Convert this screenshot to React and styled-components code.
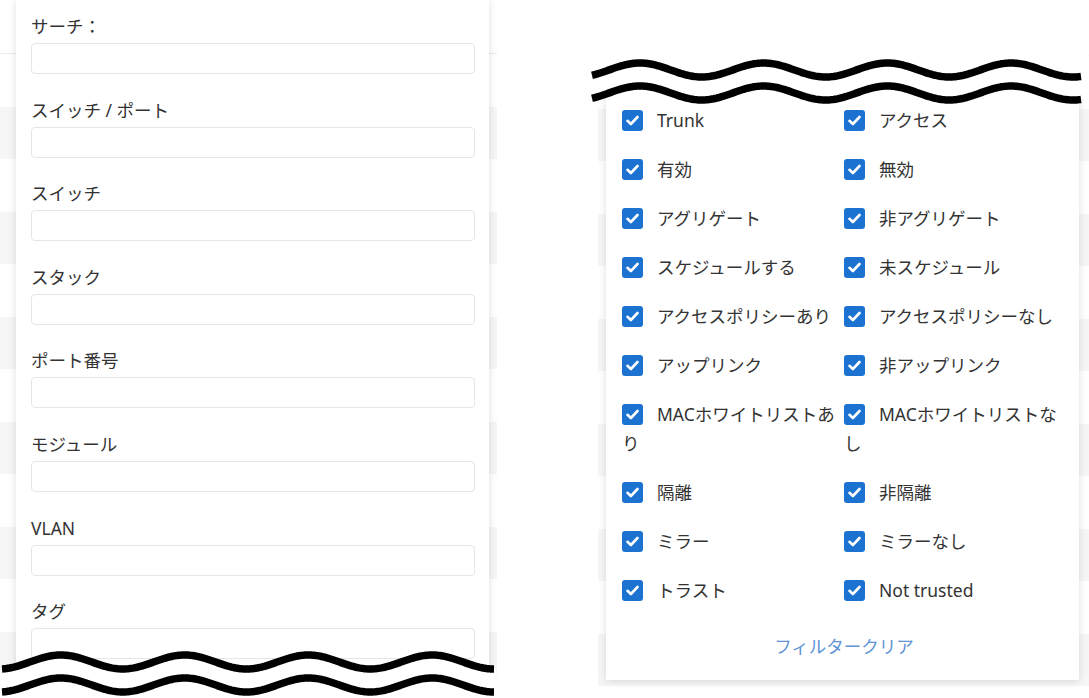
import React from 'react';
import styled, { createGlobalStyle } from 'styled-components';

const TEXT = '#333';
const BLUE = '#1b72d0';
const LINK = '#5f94d5';

const GlobalStyle = createGlobalStyle`
  html, body {
    margin: 0;
    padding: 0;
    background: #fff;
  }
  body {
    font-family: "Noto Sans", "Noto Sans CJK JP", sans-serif;
    color: ${TEXT};
  }
`;

const Page = styled.div`
  display: flex;
  align-items: flex-start;
  width: 1089px;
  height: 698px;
  overflow: hidden;
`;

// a cropped screenshot: striped table behind, panel on top
const Shot = styled.div`
  position: relative;
  flex: none;
  box-sizing: border-box;
  background-color: #fff;
  background-image:
    linear-gradient(#fff, #fff),
    linear-gradient(#ececec, #ececec),
    repeating-linear-gradient(to bottom, #fff 0 53px, #f6f6f6 53px 105px);
  background-size: 100% ${p => p.$head}px, 100% 1px, 100% 100%;
  background-position: 0 0, 0 ${p => p.$head}px, 0 ${p => p.$head + 1}px;
  background-repeat: no-repeat;
`;

const LeftShot = styled(Shot)`
  width: 497px;
  height: 698px;
  padding-left: 16px;
`;

const RightShot = styled(Shot)`
  width: 491px;
  margin-left: 101px;
  margin-top: 55px;
  padding: 0 10px 12px 8px;
`;

const Panel = styled.div`
  box-sizing: border-box;
  width: 473px;
  background: #fff;
  box-shadow: 0 1px 8px rgba(0, 0, 0, 0.13);
`;

const SearchPanel = styled(Panel)`
  height: 100%;
  padding: 14px 14px 0 15px;
`;

const FilterPanel = styled(Panel)`
  padding: 50.5px 13px 19.5px 16px;
`;

const Field = styled.div`
  margin-bottom: 23.6px;
`;

const Label = styled.label`
  display: block;
  font-size: 17.5px;
  line-height: 25px;
  margin-bottom: 4px;
`;

const Input = styled.input`
  display: block;
  box-sizing: border-box;
  width: 444px;
  height: 31px;
  border: 1px solid #e6e6e6;
  border-radius: 4px;
  background: #fff;
  outline: none;
`;

const OptionGrid = styled.div`
  display: grid;
  grid-template-columns: 222px 222px;
  row-gap: 20px;
`;

const Option = styled.label`
  display: block;
  font-size: 17.5px;
  line-height: 29px;
`;

const Box = styled.span`
  display: inline-flex;
  align-items: center;
  justify-content: center;
  width: 21px;
  height: 21px;
  margin: 4px 14px 0 0;
  vertical-align: top;
  border-radius: 3px;
  background: ${BLUE};
`;

const ClearLink = styled.a`
  display: block;
  margin-top: 27px;
  text-align: center;
  font-size: 17.5px;
  line-height: 29px;
  color: ${LINK};
  text-decoration: none;
  cursor: pointer;
`;

const WaveSvg = styled.svg`
  position: absolute;
  overflow: visible;
  left: ${p => p.$left}px;
  top: ${p => p.$top}px;
`;

function wave(x0, x1, cy, xb) {
  const amp = 7;
  const period = 123.75;
  const pts = [];
  for (let x = x0; x <= x1; x += 1.5) {
    const y = cy + amp * Math.cos((2 * Math.PI * (x - xb)) / period);
    pts.push(`${x.toFixed(1)} ${y.toFixed(2)}`);
  }
  return pts;
}

function BottomCut() {
  const fill = wave(0, 497, 26, -1);
  return (
    <WaveSvg $left={0} $top={636} width="497" height="62">
      <path d={`M${fill.join(' L')} L497 62 L0 62 Z`} fill="#fff" />
      <path d={`M${wave(2, 494, 26, -1).join(' L')}`} fill="none" stroke="#000" strokeWidth="7.5" />
      <path d={`M${wave(2, 494, 49, -1).join(' L')}`} fill="none" stroke="#000" strokeWidth="7.5" />
    </WaveSvg>
  );
}

// the svg starts 15px above the shot so it also hides the panel shadow there
function TopCut() {
  const fill = wave(0, 499, 53, -12);
  return (
    <WaveSvg $left={-8} $top={-15} width="499" height="70">
      <path d={`M${fill.join(' L')} L499 0 L0 0 Z`} fill="#fff" />
      <path d={`M${wave(2, 492, 30, -12).join(' L')}`} fill="none" stroke="#000" strokeWidth="7.5" />
      <path d={`M${wave(2, 492, 53, -12).join(' L')}`} fill="none" stroke="#000" strokeWidth="7.5" />
    </WaveSvg>
  );
}

const Check = () => (
  <svg width="13" height="11" viewBox="0 0 13 11">
    <path d="M1.5 5.8 L4.9 9 L11.5 2" fill="none" stroke="#fff" strokeWidth="2.6" strokeLinecap="round" strokeLinejoin="round" />
  </svg>
);

const fields = ['サーチ：', 'スイッチ / ポート', 'スイッチ', 'スタック', 'ポート番号', 'モジュール', 'VLAN', 'タグ'];

const options = [
  'Trunk', 'アクセス',
  '有効', '無効',
  'アグリゲート', '非アグリゲート',
  'スケジュールする', '未スケジュール',
  'アクセスポリシーあり', 'アクセスポリシーなし',
  'アップリンク', '非アップリンク',
  'MACホワイトリストあり', 'MACホワイトリストなし',
  '隔離', '非隔離',
  'ミラー', 'ミラーなし',
  'トラスト', 'Not trusted',
];

export default function App() {
  return (
    <Page>
      <GlobalStyle />
      <LeftShot $head={53}>
        <SearchPanel>
          {fields.map(f => (
            <Field key={f}>
              <Label>{f}</Label>
              <Input type="text" />
            </Field>
          ))}
        </SearchPanel>
        <BottomCut />
      </LeftShot>

      <RightShot $head={0}>
        <FilterPanel>
          <OptionGrid>
            {options.map(o => (
              <Option key={o}>
                <Box><Check /></Box>
                {o}
              </Option>
            ))}
          </OptionGrid>
          <ClearLink>フィルタークリア</ClearLink>
        </FilterPanel>
        <TopCut />
      </RightShot>
    </Page>
  );
}
